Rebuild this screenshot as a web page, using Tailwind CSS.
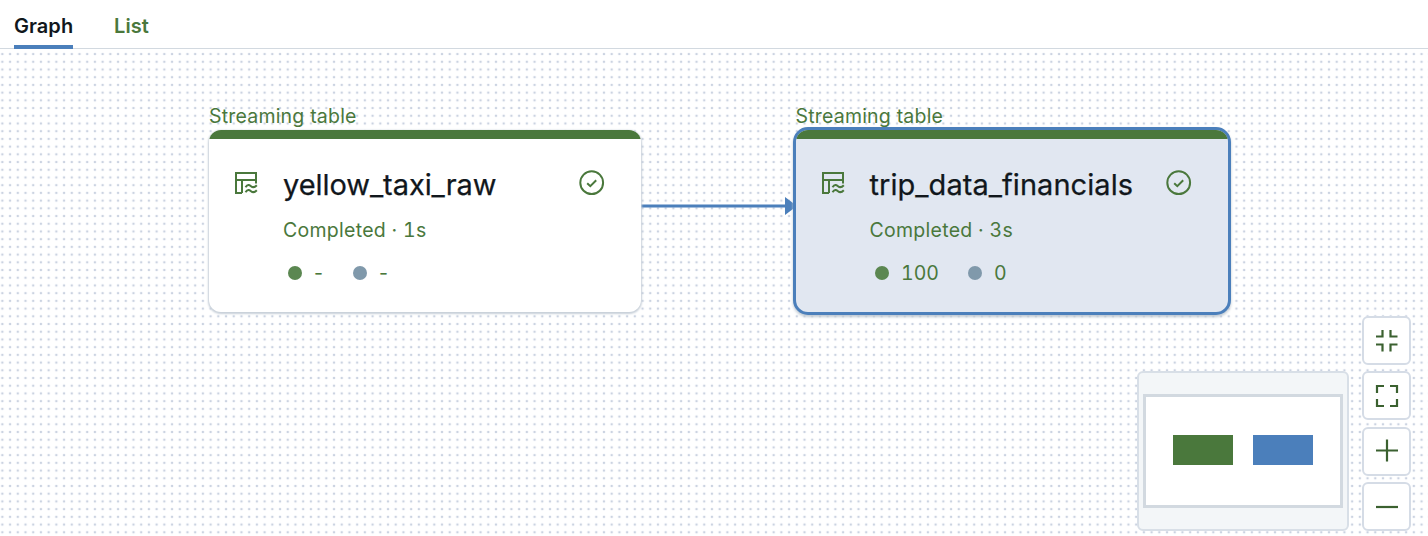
<!DOCTYPE html>
<html lang="en">
<head>
<meta charset="utf-8">
<title>Pipeline graph</title>
<script src="https://cdn.jsdelivr.net/npm/@tailwindcss/browser@4"></script>
</head>
<body class="flex h-[536px] w-[1428px] flex-col overflow-hidden bg-white font-['Inter',sans-serif] text-[#4a783c]">
<svg class="hidden">
  <symbol id="stream" viewBox="0 0 24 24"><g fill="none" stroke="currentColor" stroke-width="2"><path d="M8 22H2V2H22V12.5M2 9H22M8 9V22"/><path d="M11.5 16.2C13.5 13.2 15.2 13.7 17 15.2S20.5 16.7 22.8 14.2M11.5 21.2C13.5 18.2 15.2 18.7 17 20.2S20.5 21.7 22.8 19.2"/></g></symbol>
  <symbol id="check" viewBox="0 0 26 26"><g fill="none" stroke="currentColor" stroke-width="2"><circle cx="12.7" cy="12.7" r="11.4"/><path d="M8.2 13.2L11.3 16.2L17.2 10.2"/></g></symbol>
</svg>
<nav class="flex h-[49px] shrink-0 gap-[41px] border-b-[1.5px] border-[#d2d9e0] pl-[14px] text-[20px] font-semibold">
  <a class="relative h-[49px] w-[59px] pt-[10.5px] leading-[30px] whitespace-nowrap text-[#11171c]"><span class="tracking-[0.05px]">Graph</span><i class="absolute bottom-0 left-0 h-[4px] w-full bg-[#4b7fbb]"></i></a>
  <a class="pt-[10.5px] leading-[30px] tracking-[0.1px]">List</a>
</nav>
<main class="relative flex-1">
  <svg class="absolute inset-0 h-full w-full">
    <defs><pattern id="dots" x="-1.5" y="1.2" width="7.713" height="7.713" patternUnits="userSpaceOnUse"><circle cx="3.86" cy="3.86" r="1.25" fill="#cbd3e1"/></pattern></defs>
    <rect width="1428" height="487" fill="url(#dots)"/>
    <path d="M641 157H787" stroke="#4b7fbb" stroke-width="3"/><path d="M785 148L797 157L785 166Z" fill="#4b7fbb"/>
  </svg>

  <section class="absolute top-[54px] left-[209px] w-[432px]">
    <h3 class="h-[27px] text-[19.5px] leading-[27px] tracking-[0.2px] whitespace-nowrap"><span>Streaming table</span></h3>
    <div class="h-[182px] overflow-hidden rounded-[12px] bg-white shadow-[0_1px_2px_1px_#c8d0d9]">
      <div class="h-[9px] bg-[#4a783c]"></div>
      <div class="flex pl-[25px]">
        <svg class="mt-[32px] h-6 w-6 shrink-0"><use href="#stream"/></svg>
        <div class="ml-[25px] w-[296px] pt-[25px]">
          <div class="h-[42px] text-[29px] leading-[42px] tracking-[-0.06px] whitespace-nowrap text-[#11171c] [-webkit-text-stroke:0.25px_#11171c]"><span>yellow_taxi_raw</span></div>
          <div class="mt-[10px] h-[28px] text-[19.5px] leading-[28px] tracking-[0.28px] tabular-nums whitespace-nowrap"><span>Completed · 1s</span></div>
          <div class="mt-[15px] flex h-[28px] items-center pl-[5px] text-[19.5px]"><i class="h-[14px] w-[14px] rounded-full bg-[#5b8751]"></i><span class="mt-[2px] ml-[12px] w-[10px]">-</span><i class="ml-[29px] h-[14px] w-[14px] rounded-full bg-[#8099ab]"></i><span class="mt-[2px] ml-[12px]">-</span></div>
        </div>
        <svg class="mt-[31px] h-[26px] w-[26px] shrink-0"><use href="#check"/></svg>
      </div>
    </div>
  </section>

  <section class="absolute top-[54px] left-[793px] w-[438px]">
    <h3 class="h-[24px] pl-[2.5px] text-[19.5px] leading-[27px] tracking-[0.2px] whitespace-nowrap"><span>Streaming table</span></h3>
    <div class="h-[188px] overflow-hidden rounded-[15px] border-[3px] border-[#4b7fbb] bg-[#e1e7f1] shadow-[0_2px_3px_0_#bec8d1]">
      <div class="h-[9px] bg-[#4a783c]"></div>
      <div class="flex pl-[25px]">
        <svg class="mt-[32px] h-6 w-6 shrink-0"><use href="#stream"/></svg>
        <div class="ml-[24.5px] w-[296px] pt-[25px]">
          <div class="h-[42px] text-[29px] leading-[42px] tracking-[0.05px] whitespace-nowrap text-[#11171c] [-webkit-text-stroke:0.25px_#11171c]"><span>trip_data_financials</span></div>
          <div class="mt-[10px] h-[28px] text-[19.5px] leading-[28px] tracking-[0.28px] tabular-nums whitespace-nowrap"><span>Completed · 3s</span></div>
          <div class="mt-[15px] flex h-[28px] items-center pl-[5.5px] text-[19.5px] tabular-nums"><i class="h-[14px] w-[14px] rounded-full bg-[#5b8751]"></i><span class="mt-[2px] ml-[12px] w-[38px]">100</span><i class="ml-[29px] h-[14px] w-[14px] rounded-full bg-[#8099ab]"></i><span class="mt-[2px] ml-[12px]">0</span></div>
        </div>
        <svg class="mt-[31px] h-[26px] w-[26px] shrink-0"><use href="#check"/></svg>
      </div>
    </div>
  </section>

  <aside class="absolute right-[17px] bottom-[5px] flex items-end gap-[13px]">
    <div class="h-[160px] w-[212px] rounded-[6px] border-2 border-[#d8dfe7] bg-[#f3f6f8] px-[4px] pt-[21px]">
      <div class="flex h-[114px] w-[200px] items-center justify-center gap-5 border-[3px] border-[#d2d9e0] bg-white pb-[2px]"><i class="h-[30px] w-[60px] bg-[#4a783c]"></i><i class="h-[30px] w-[60px] bg-[#4b7fbb]"></i></div>
    </div>
    <div class="flex flex-col gap-[6.3px] [&>button]:flex [&>button]:h-[49px] [&>button]:w-[49px] [&>button]:items-center [&>button]:justify-center [&>button]:rounded-[6px] [&>button]:border-2 [&>button]:border-[#d5dce6] [&>button]:bg-white">
      <button aria-label="Collapse"><svg class="h-6 w-6" fill="none" stroke="#3b6130" stroke-width="2.2"><path d="M1 7.5H7.5V1M15.5 1V7.5H22.5M1 15.5H7.5V22.5M15.5 22.5V15.5H22.5"/></svg></button>
      <button aria-label="Fit"><svg class="h-6 w-6" fill="none" stroke="#3b6130" stroke-width="2.2"><path d="M2 9V2H9M15 2H22V9M2 15V22H9M15 22H22V15"/></svg></button>
      <button aria-label="Zoom in"><svg class="h-6 w-6" fill="none" stroke="#3b6130" stroke-width="2.2"><path d="M1 11.5H23M12 .5V22.5"/></svg></button>
      <button aria-label="Zoom out"><svg class="h-6 w-6" fill="none" stroke="#3b6130" stroke-width="2.2"><path d="M1 12H23"/></svg></button>
    </div>
  </aside>
</main>
</body>
</html>
